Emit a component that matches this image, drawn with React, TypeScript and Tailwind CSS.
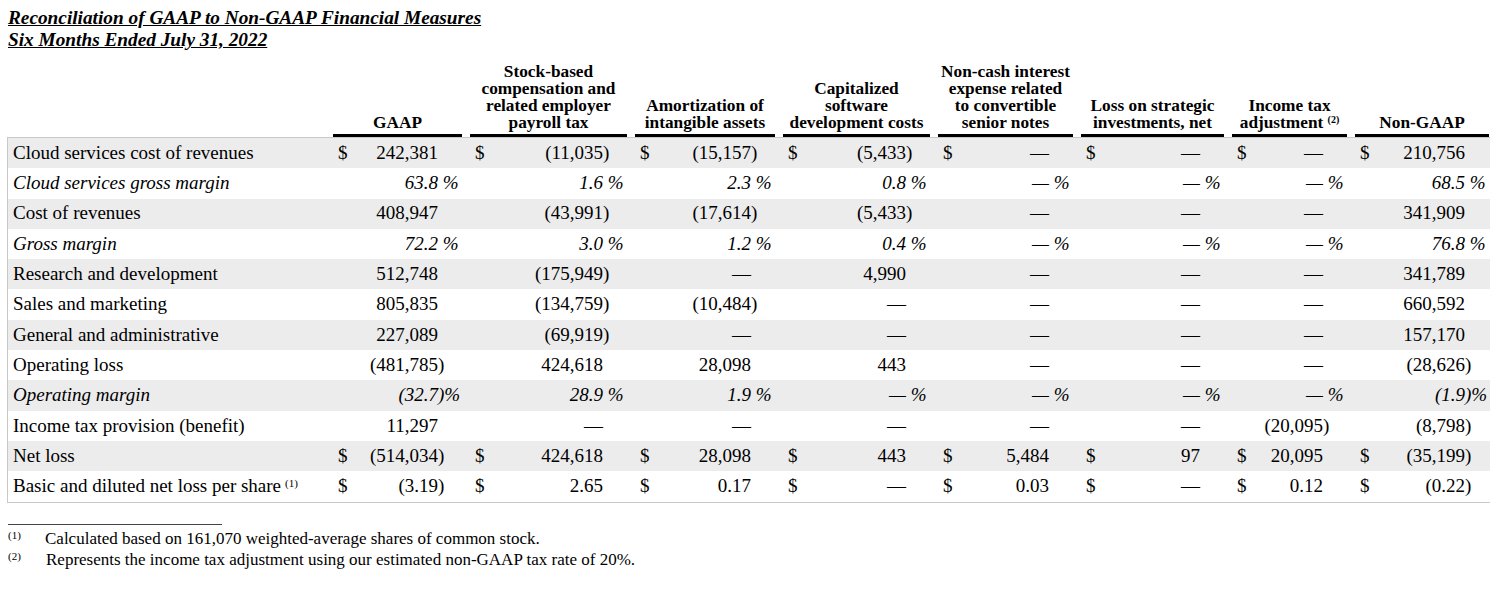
const serif = "font-['Liberation_Serif','Times_New_Roman',serif]";

type Row = {
  label: string;
  italic?: boolean;
  dollar?: boolean;
  sup?: string;
  cells: string[];
};

const rows: Row[] = [
  {
    label: 'Cloud services cost of revenues',
    dollar: true,
    cells: ['242,381', '(11,035)', '(15,157)', '(5,433)', '—', '—', '—', '210,756'],
  },
  {
    label: 'Cloud services gross margin',
    italic: true,
    cells: ['63.8 %', '1.6 %', '2.3 %', '0.8 %', '— %', '— %', '— %', '68.5 %'],
  },
  {
    label: 'Cost of revenues',
    cells: ['408,947', '(43,991)', '(17,614)', '(5,433)', '—', '—', '—', '341,909'],
  },
  {
    label: 'Gross margin',
    italic: true,
    cells: ['72.2 %', '3.0 %', '1.2 %', '0.4 %', '— %', '— %', '— %', '76.8 %'],
  },
  {
    label: 'Research and development',
    cells: ['512,748', '(175,949)', '—', '4,990', '—', '—', '—', '341,789'],
  },
  {
    label: 'Sales and marketing',
    cells: ['805,835', '(134,759)', '(10,484)', '—', '—', '—', '—', '660,592'],
  },
  {
    label: 'General and administrative',
    cells: ['227,089', '(69,919)', '—', '—', '—', '—', '—', '157,170'],
  },
  {
    label: 'Operating loss',
    cells: ['(481,785)', '424,618', '28,098', '443', '—', '—', '—', '(28,626)'],
  },
  {
    label: 'Operating margin',
    italic: true,
    cells: ['(32.7)%', '28.9 %', '1.9 %', '— %', '— %', '— %', '— %', '(1.9)%'],
  },
  {
    label: 'Income tax provision (benefit)',
    cells: ['11,297', '—', '—', '—', '—', '—', '(20,095)', '(8,798)'],
  },
  {
    label: 'Net loss',
    dollar: true,
    cells: ['(514,034)', '424,618', '28,098', '443', '5,484', '97', '20,095', '(35,199)'],
  },
  {
    label: 'Basic and diluted net loss per share',
    sup: '(1)',
    dollar: true,
    cells: ['(3.19)', '2.65', '0.17', '—', '0.03', '—', '0.12', '(0.22)'],
  },
];

// split a figure into the part that lines up and the hanging ")" or "%"
function split(str: string): [string, string] {
  if (str.endsWith(')%')) return [str.slice(0, -2), ')%'];
  if (str.endsWith(' %')) return [str.slice(0, -2), '\u00a0%'];
  if (str.endsWith(')')) return [str.slice(0, -1), ')'];
  return [str, ''];
}

function Figure({ value, dollar }: { value: string; dollar?: boolean }) {
  const [v, s] = split(value);
  return (
    <div className="flex items-center whitespace-nowrap">
      <span className="w-[16px] pl-[5px]">{dollar ? '$' : ''}</span>
      <span className="flex-1 text-right">{v}</span>
      <span className="w-[24px] text-left">{s}</span>
    </div>
  );
}

function HeadCell({ children }: { children: React.ReactNode }) {
  return (
    <div className="text-center font-bold text-[17.3px] leading-[17px] border-b-[3px] border-black pb-[3px]">
      {children}
    </div>
  );
}

export default function App() {
  return (
    <div className={`w-[1500px] h-[591px] bg-white text-black ${serif}`}>
      {/* Title */}
      <div className="pl-[8px] pt-[7px] text-[19.3px] leading-[22px] font-bold italic underline">
        <div>Reconciliation of GAAP to Non-GAAP Financial Measures</div>
        <div>Six Months Ended July 31, 2022</div>
      </div>

      <div className="ml-[7px] w-[1483px] mt-[12px]">
        {/* Column headings */}
        <div className="grid grid-cols-[317px_129px_157px_140px_147px_135px_143px_115px_134px] gap-x-[8px] items-end pl-px">
          <div />
          <HeadCell>GAAP</HeadCell>
          <HeadCell>
            Stock-based
            <br />
            compensation and
            <br />
            related employer
            <br />
            payroll tax
          </HeadCell>
          <HeadCell>
            Amortization of
            <br />
            intangible assets
          </HeadCell>
          <HeadCell>
            Capitalized
            <br />
            software
            <br />
            development costs
          </HeadCell>
          <HeadCell>
            Non-cash interest
            <br />
            expense related
            <br />
            to convertible
            <br />
            senior notes
          </HeadCell>
          <HeadCell>
            Loss on strategic
            <br />
            investments, net
          </HeadCell>
          <HeadCell>
            Income tax
            <br />
            adjustment <sup className="text-[10px]">(2)</sup>
          </HeadCell>
          <HeadCell>Non-GAAP</HeadCell>
        </div>

        {/* Body */}
        <div className="border-l border-t border-b border-[#c9c9c9] text-[19px]">
          {rows.map((row, i) => (
            <div
              key={row.label}
              className={`grid grid-cols-[317px_129px_157px_140px_147px_135px_143px_115px_134px] gap-x-[8px] items-center h-[30.3px] ${
                i % 2 === 0 ? 'bg-[#ececec]' : 'bg-white'
              } ${row.italic ? 'italic' : ''}`}
            >
              <div className="pl-[5px] whitespace-nowrap">
                {row.label}
                {row.sup && <sup className="text-[11px] ml-[4px]">{row.sup}</sup>}
              </div>
              {row.cells.map((c, j) => (
                <Figure key={j} value={c} dollar={row.dollar} />
              ))}
            </div>
          ))}
        </div>
      </div>

      {/* Footnotes */}
      <div className="ml-[8px] mt-[21px] w-[214px] border-t border-[#444]" />
      <div className="ml-[8px] mt-[3px] text-[17px] leading-[21px]">
        <div className="flex">
          <span className="w-[37px] text-[11px] leading-[14px]">(1)</span>
          <span>Calculated based on 161,070 weighted-average shares of common stock.</span>
        </div>
        <div className="flex">
          <span className="w-[38px] text-[11px] leading-[14px]">(2)</span>
          <span>Represents the income tax adjustment using our estimated non-GAAP tax rate of 20%.</span>
        </div>
      </div>
    </div>
  );
}
